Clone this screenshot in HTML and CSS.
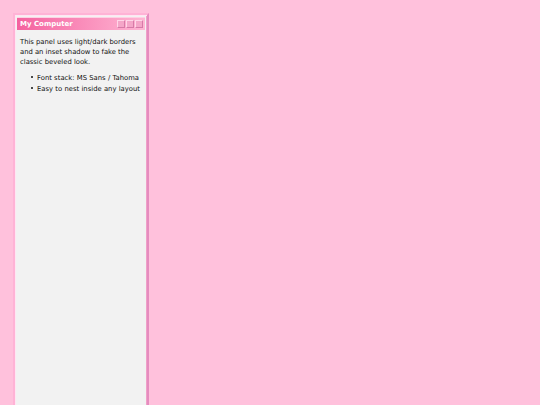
FILE: index.html
```html
<!DOCTYPE html>
<html>
<head>
<meta charset="utf-8">
<link rel="stylesheet" href="styles.css">
</head>
<body>
<div class="window">
  <div class="titlebar">
    <span class="title">My Computer</span>
    <span class="controls"><span class="btn"></span><span class="btn"></span><span class="btn"></span></span>
  </div>
  <div class="content">
    <p>This panel uses light/dark borders and an inset shadow to fake the classic beveled look.</p>
    <ul>
      <li>Font stack: MS Sans / Tahoma</li>
      <li>Easy to nest inside any layout</li>
    </ul>
  </div>
</div>
</body>
</html>
```
FILE: styles.css
```css
html, body { margin: 0; padding: 0; }
body {
  background: #ffc1dc;
  font-family: "DejaVu Sans", Verdana, sans-serif;
  font-size: 6.8px;
  color: #111;
  padding: 13px;
  height: 405px;
  box-sizing: border-box;
  overflow: hidden;
}
.window {
  width: 136px;
  height: 420px;
  box-sizing: border-box;
  background: #f2f2f2;
  border: 2px solid;
  border-color: #ffb3d6 #e58cbf #e58cbf #ffb3d6;
  box-shadow: inset 1px 1px 0 #ffe6f2, inset -1px -1px 0 #f0a0c8;
  padding: 2px;
}
.titlebar {
  height: 13px;
  box-sizing: border-box;
  background: linear-gradient(to right, #f4629f, #ffb6d4);
  border-top: 1px solid #ffd0e4;
  display: flex;
  align-items: center;
  justify-content: space-between;
  padding: 0 2px 0 3px;
}
.title {
  color: #fff;
  font-weight: bold;
  font-size: 7px;
}
.controls { display: flex; gap: 1px; }
.btn {
  width: 6px;
  height: 6px;
  background: #f4a6c8;
  border: 1px solid;
  border-color: #ffd6e8 #d77aa8 #d77aa8 #ffd6e8;
}
.content { padding: 7px 0 4px 3px; line-height: 10px; }
.content p { margin: 0 0 6px; }
.content ul { margin: 0; padding-left: 17px; list-style: none; }
.content li { margin-bottom: 1px; white-space: nowrap; letter-spacing: 0.03px; }
.content li::before {
  content: "";
  display: inline-block;
  width: 2px;
  height: 2px;
  border-radius: 50%;
  background: #111;
  margin-left: -6px;
  margin-right: 4px;
  vertical-align: 2px;
}
```
